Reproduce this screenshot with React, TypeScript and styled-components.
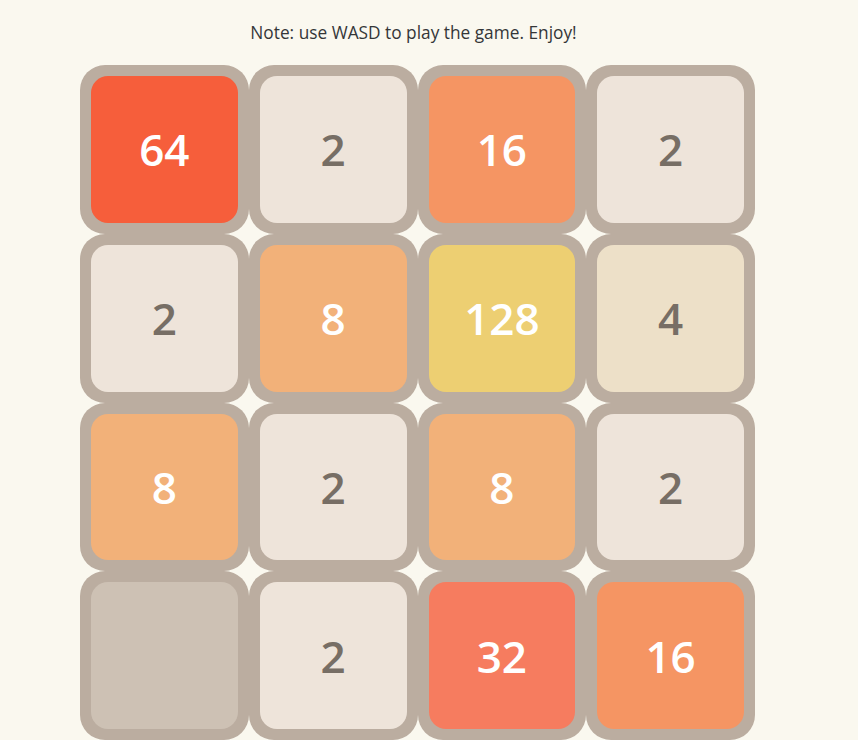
import React from "react";
import styled, { createGlobalStyle } from "styled-components";

const GlobalStyle = createGlobalStyle`
  html, body {
    margin: 0;
    padding: 0;
    background: #faf8ef;
    font-family: "Open Sans", "Noto Sans", sans-serif;
    overflow: hidden;
  }
`;

const Page = styled.div`
  display: flex;
  flex-direction: column;
  align-items: center;
  width: 675px;
  margin-left: 80px;
  padding-top: 21px;
`;

const Note = styled.p`
  margin: 0 0 20px 0;
  font-size: 17.3px;
  line-height: 24px;
  color: #343638;
  transform: translateX(-4px);
`;

const Board = styled.div`
  display: grid;
  grid-template-columns: repeat(4, 168.75px);
  grid-auto-rows: 168.75px;
`;

const Cell = styled.div`
  background: #bbada0;
  border-radius: 25px;
  padding: 11px;
  box-sizing: border-box;
  display: flex;
`;

type TileStyle = { bg: string; fg: string };

const palette: Record<number, TileStyle> = {
  0: { bg: "#cdc1b4", fg: "#776e65" },
  2: { bg: "#eee4da", fg: "#776e65" },
  4: { bg: "#ede0c8", fg: "#776e65" },
  8: { bg: "#f2b179", fg: "#ffffff" },
  16: { bg: "#f59563", fg: "#ffffff" },
  32: { bg: "#f67c5f", fg: "#ffffff" },
  64: { bg: "#f65e3b", fg: "#ffffff" },
  128: { bg: "#edcf72", fg: "#ffffff" },
};

const Tile = styled.div<{ $bg: string; $fg: string }>`
  flex: 1;
  border-radius: 17px;
  background: ${(p) => p.$bg};
  color: ${(p) => p.$fg};
  display: flex;
  align-items: center;
  justify-content: center;
  font-size: 44px;
  font-weight: 600;
  line-height: 1;
`;

const board = [
  [64, 2, 16, 2],
  [2, 8, 128, 4],
  [8, 2, 8, 2],
  [0, 2, 32, 16],
];

export default function App() {
  return (
    <>
      <GlobalStyle />
      <Page>
        <Note>Note: use WASD to play the game. Enjoy!</Note>
        <Board>
          {board.flat().map((v, i) => {
            const s = palette[v];
            return (
              <Cell key={i}>
                <Tile $bg={s.bg} $fg={s.fg}>
                  {v === 0 ? "" : v}
                </Tile>
              </Cell>
            );
          })}
        </Board>
      </Page>
    </>
  );
}
